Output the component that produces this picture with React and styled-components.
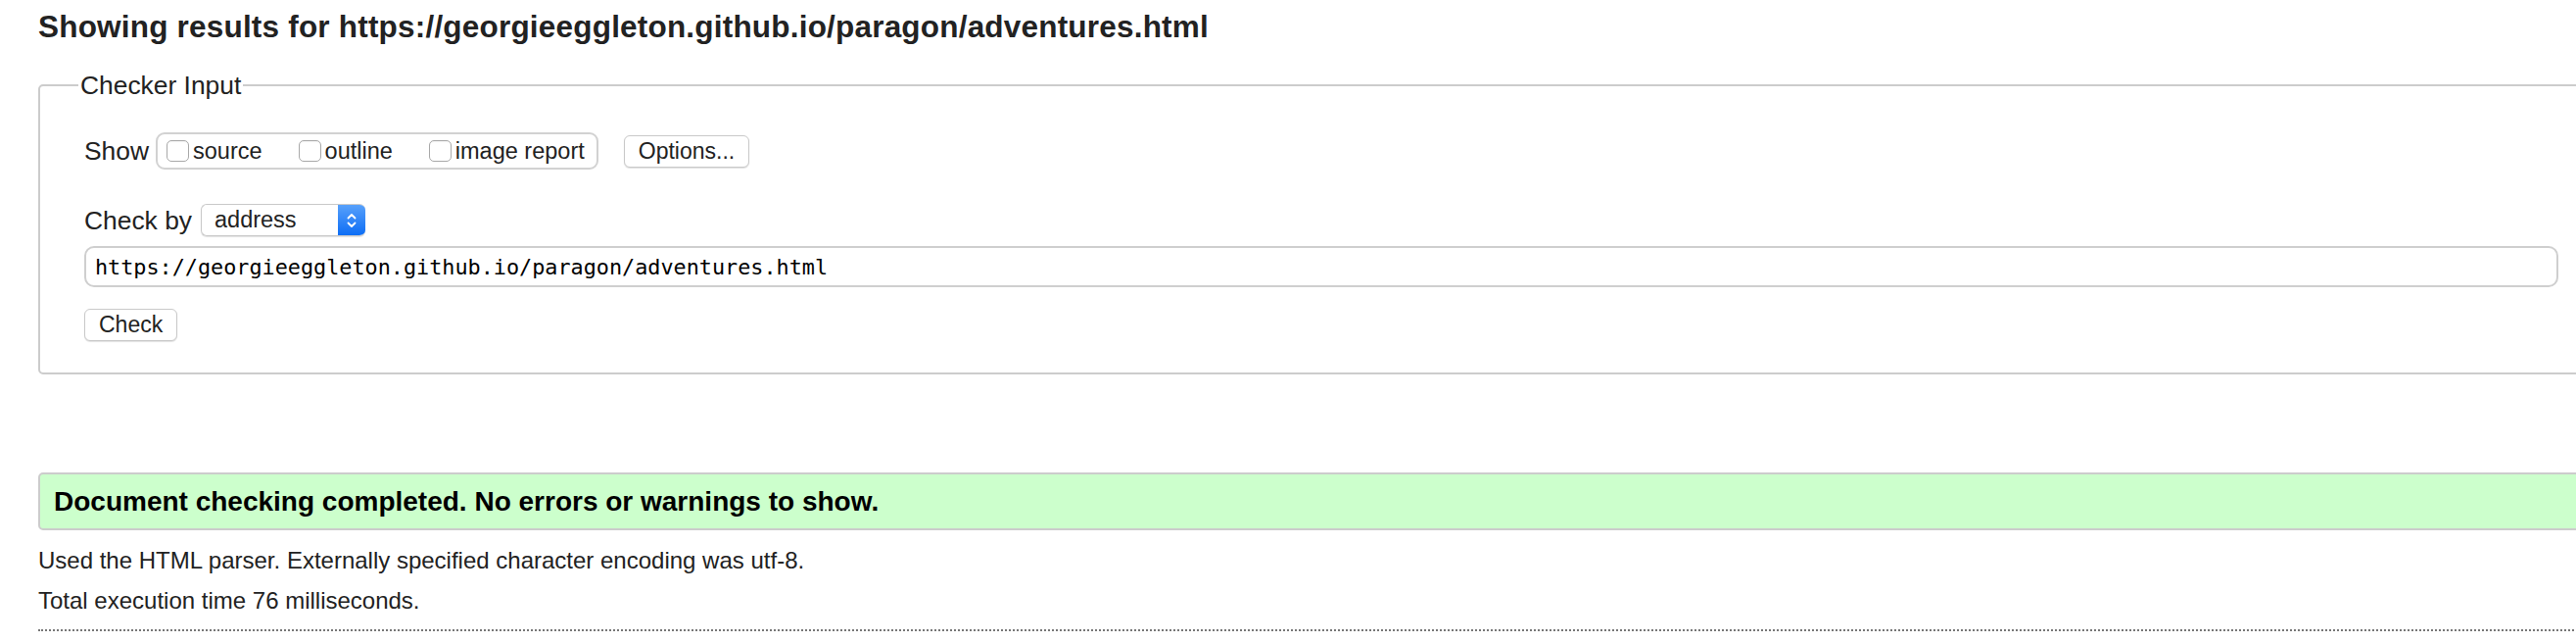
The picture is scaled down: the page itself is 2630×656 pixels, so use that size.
import React from "react";
import styled, { createGlobalStyle } from "styled-components";

const GlobalStyle = createGlobalStyle`
  html, body {
    margin: 0;
    padding: 0;
    background: #fff;
    overflow: hidden;
  }
  body {
    font-family: "Liberation Sans", Arial, Helvetica, sans-serif;
    color: #222;
  }
`;

const CHECKS = ["source", "outline", "image report"];
const URL = "https://georgieeggleton.github.io/paragon/adventures.html";

export default function App() {
  return (
    <>
      <GlobalStyle />
      <Page>
        <Title>Showing results for {URL}</Title>

        <Fieldset>
          <Legend>Checker Input</Legend>
          <Row>
            <FieldLabel $gap={7}>Show</FieldLabel>
            <OptionGroup>
              {CHECKS.map((c) => (
                <Option key={c}>
                  <Box />
                  {c}
                </Option>
              ))}
            </OptionGroup>
            <Button $gap={26}>Options...</Button>
          </Row>

          <Row $top={35}>
            <FieldLabel>Check by</FieldLabel>
            <Select>
              <SelectText>address</SelectText>
              <SelectArrow>
                <svg width="12" height="20" viewBox="0 0 12 20" fill="none">
                  <path d="M2.5 7.5 L6 4 L9.5 7.5" stroke="#fff" strokeWidth="1.8" strokeLinecap="round" strokeLinejoin="round" />
                  <path d="M2.5 12.5 L6 16 L9.5 12.5" stroke="#fff" strokeWidth="1.8" strokeLinecap="round" strokeLinejoin="round" />
                </svg>
              </SelectArrow>
            </Select>
          </Row>

          <UrlInput readOnly value={URL} />

          <Row $top={22}>
            <Button>Check</Button>
          </Row>
        </Fieldset>

        <Success>Document checking completed. No errors or warnings to show.</Success>

        <Info $top={15}>Used the HTML parser. Externally specified character encoding was utf-8.</Info>
        <Info $top={9}>Total execution time 76 milliseconds.</Info>

        <Rule />
      </Page>
    </>
  );
}

const Page = styled.div`
  width: 2620px;
  padding: 7px 0 0 39px;
`;

const Title = styled.h2`
  margin: 0;
  font-size: 31.5px;
  line-height: 40px;
  font-weight: 700;
  letter-spacing: 0.2px;
  color: #222;
  white-space: nowrap;
`;

const Fieldset = styled.fieldset`
  margin: 24px 0 0;
  padding: 32px 45px 32px;
  border: 2px solid #ccc;
  border-radius: 5px;
  min-width: 0;
`;

const Legend = styled.legend`
  font-size: 26.4px;
  line-height: 32px;
  padding: 0 2px;
  margin-left: -6px;
  color: #222;
`;

const Row = styled.div`
  display: flex;
  align-items: center;
  margin-top: ${(p) => p.$top || 0}px;
`;

const FieldLabel = styled.span`
  font-size: 26.4px;
  line-height: 32px;
  margin-right: ${(p) => p.$gap || 9}px;
`;

const OptionGroup = styled.div`
  display: flex;
  align-items: center;
  height: 38px;
  box-sizing: border-box;
  border: 2px solid #d2d2d2;
  border-radius: 9px;
  padding: 0 12px 0 9px;
`;

const Option = styled.label`
  display: flex;
  align-items: center;
  font-size: 23.5px;
  line-height: 32px;

  & + & {
    margin-left: 37px;
  }
`;

const Box = styled.input.attrs({ type: "checkbox" })`
  appearance: none;
  margin: 0 4px 0 0;
  width: 23px;
  height: 22px;
  box-sizing: border-box;
  border: 1px solid #a9a9a9;
  border-radius: 5px;
  background: #fff;
  box-shadow: inset 0 1px 1px rgba(0, 0, 0, 0.06);
`;

const Button = styled.button`
  height: 33px;
  margin: 0 0 0 ${(p) => p.$gap || 0}px;
  padding: 0 14px;
  font-family: inherit;
  font-size: 23px;
  color: #222;
  background: #fff;
  border: 1px solid #c9c9c9;
  border-radius: 6px;
  box-shadow: 0 1px 1px rgba(0, 0, 0, 0.12);
`;

const Select = styled.div`
  display: flex;
  width: 168px;
  height: 33px;
  box-sizing: border-box;
  border: 1px solid #c9c9c9;
  border-right: none;
  border-radius: 6px;
  box-shadow: 0 1px 1px rgba(0, 0, 0, 0.12);
  overflow: hidden;
`;

const SelectText = styled.span`
  flex: 1;
  padding-left: 13px;
  font-size: 23.5px;
  line-height: 31px;
  color: #222;
`;

const SelectArrow = styled.span`
  width: 28px;
  display: flex;
  align-items: center;
  justify-content: center;
  margin: -1px 0;
  background: linear-gradient(#5aa2fb, #0b6cf5);
`;

const UrlInput = styled.input`
  display: block;
  width: 100%;
  height: 42px;
  margin-top: 10px;
  box-sizing: border-box;
  padding: 0 9px;
  border: 2px solid #cfcfcf;
  border-radius: 10px;
  font-family: "DejaVu Sans Mono", "Liberation Mono", monospace;
  font-size: 21.8px;
  color: #000;
  outline: none;
`;

const Success = styled.div`
  display: flex;
  align-items: center;
  height: 59px;
  margin-top: 100px;
  box-sizing: border-box;
  padding: 0 14px;
  border: 2px solid #ccc;
  border-radius: 5px;
  background: #ccffcc;
  font-size: 28px;
  font-weight: 700;
  color: #000;
`;

const Info = styled.p`
  margin: ${(p) => p.$top}px 0 0;
  font-size: 24px;
  line-height: 32px;
  color: #222;
`;

const Rule = styled.div`
  margin-top: 13px;
  border-top: 2px dotted #777;
`;
